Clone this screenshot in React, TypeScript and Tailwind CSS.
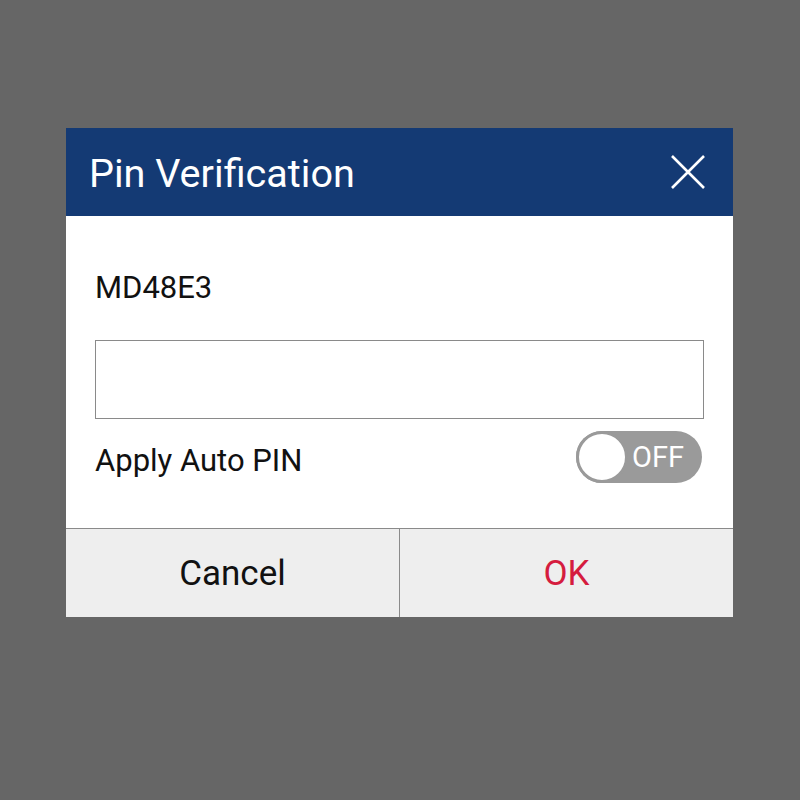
import { useState } from 'react';

export default function App() {
  const [pin, setPin] = useState('');
  const [autoPin, setAutoPin] = useState(false);

  return (
    <div
      className="w-[800px] h-[800px] bg-[#666666] pt-[128px] pl-[66px]"
      style={{ fontFamily: 'Roboto, "Noto Sans", sans-serif' }}
    >
      <div className="w-[667px] bg-white flex flex-col">
        <div className="h-[88px] bg-[#143a74] flex items-center justify-between pl-[23px] pr-[28px]">
          <h1 className="text-[39.6px] leading-none text-white mt-[3px]">Pin Verification</h1>
          <button type="button" className="w-[34px] h-[34px] text-white">
            <svg viewBox="0 0 34 34" className="w-full h-full" fill="none" stroke="currentColor" strokeWidth="2.6">
              <path d="M1 1 L33 33 M33 1 L1 33" />
            </svg>
          </button>
        </div>

        <div className="h-[312px] flex flex-col pl-[29px] pr-[29px] pt-[54px]">
          <p className="text-[31px] leading-[36px] text-[#111]">MD48E3</p>
          <input
            value={pin}
            onChange={(e) => setPin(e.target.value)}
            className="mt-[34px] h-[79px] w-full border border-[#8a8a8a] outline-none px-3 text-[28px]"
          />
          <div className="mt-[12px] flex items-center justify-between">
            <span className="text-[31px] leading-none text-[#111] mt-[6px]">Apply Auto PIN</span>
            <button
              type="button"
              onClick={() => setAutoPin(!autoPin)}
              className="mr-[2px] w-[126px] h-[52px] rounded-full bg-[#9a9a9a] flex items-center relative"
            >
              <span className="absolute left-0 top-0 w-[52px] h-[52px] rounded-full bg-white border-[3px] border-[#9a9a9a]" />
              <span className="ml-[56px] text-[29px] leading-none text-white">OFF</span>
            </button>
          </div>
        </div>

        <div className="h-[89px] bg-[#eeeeee] border-t border-[#8a8a8a] flex">
          <button type="button" className="flex-1 border-r border-[#8a8a8a] text-[35px] text-[#111] pt-[2px]">
            Cancel
          </button>
          <button type="button" className="flex-1 text-[35px] text-[#d51c3e] pt-[2px]">
            OK
          </button>
        </div>
      </div>
    </div>
  );
}
